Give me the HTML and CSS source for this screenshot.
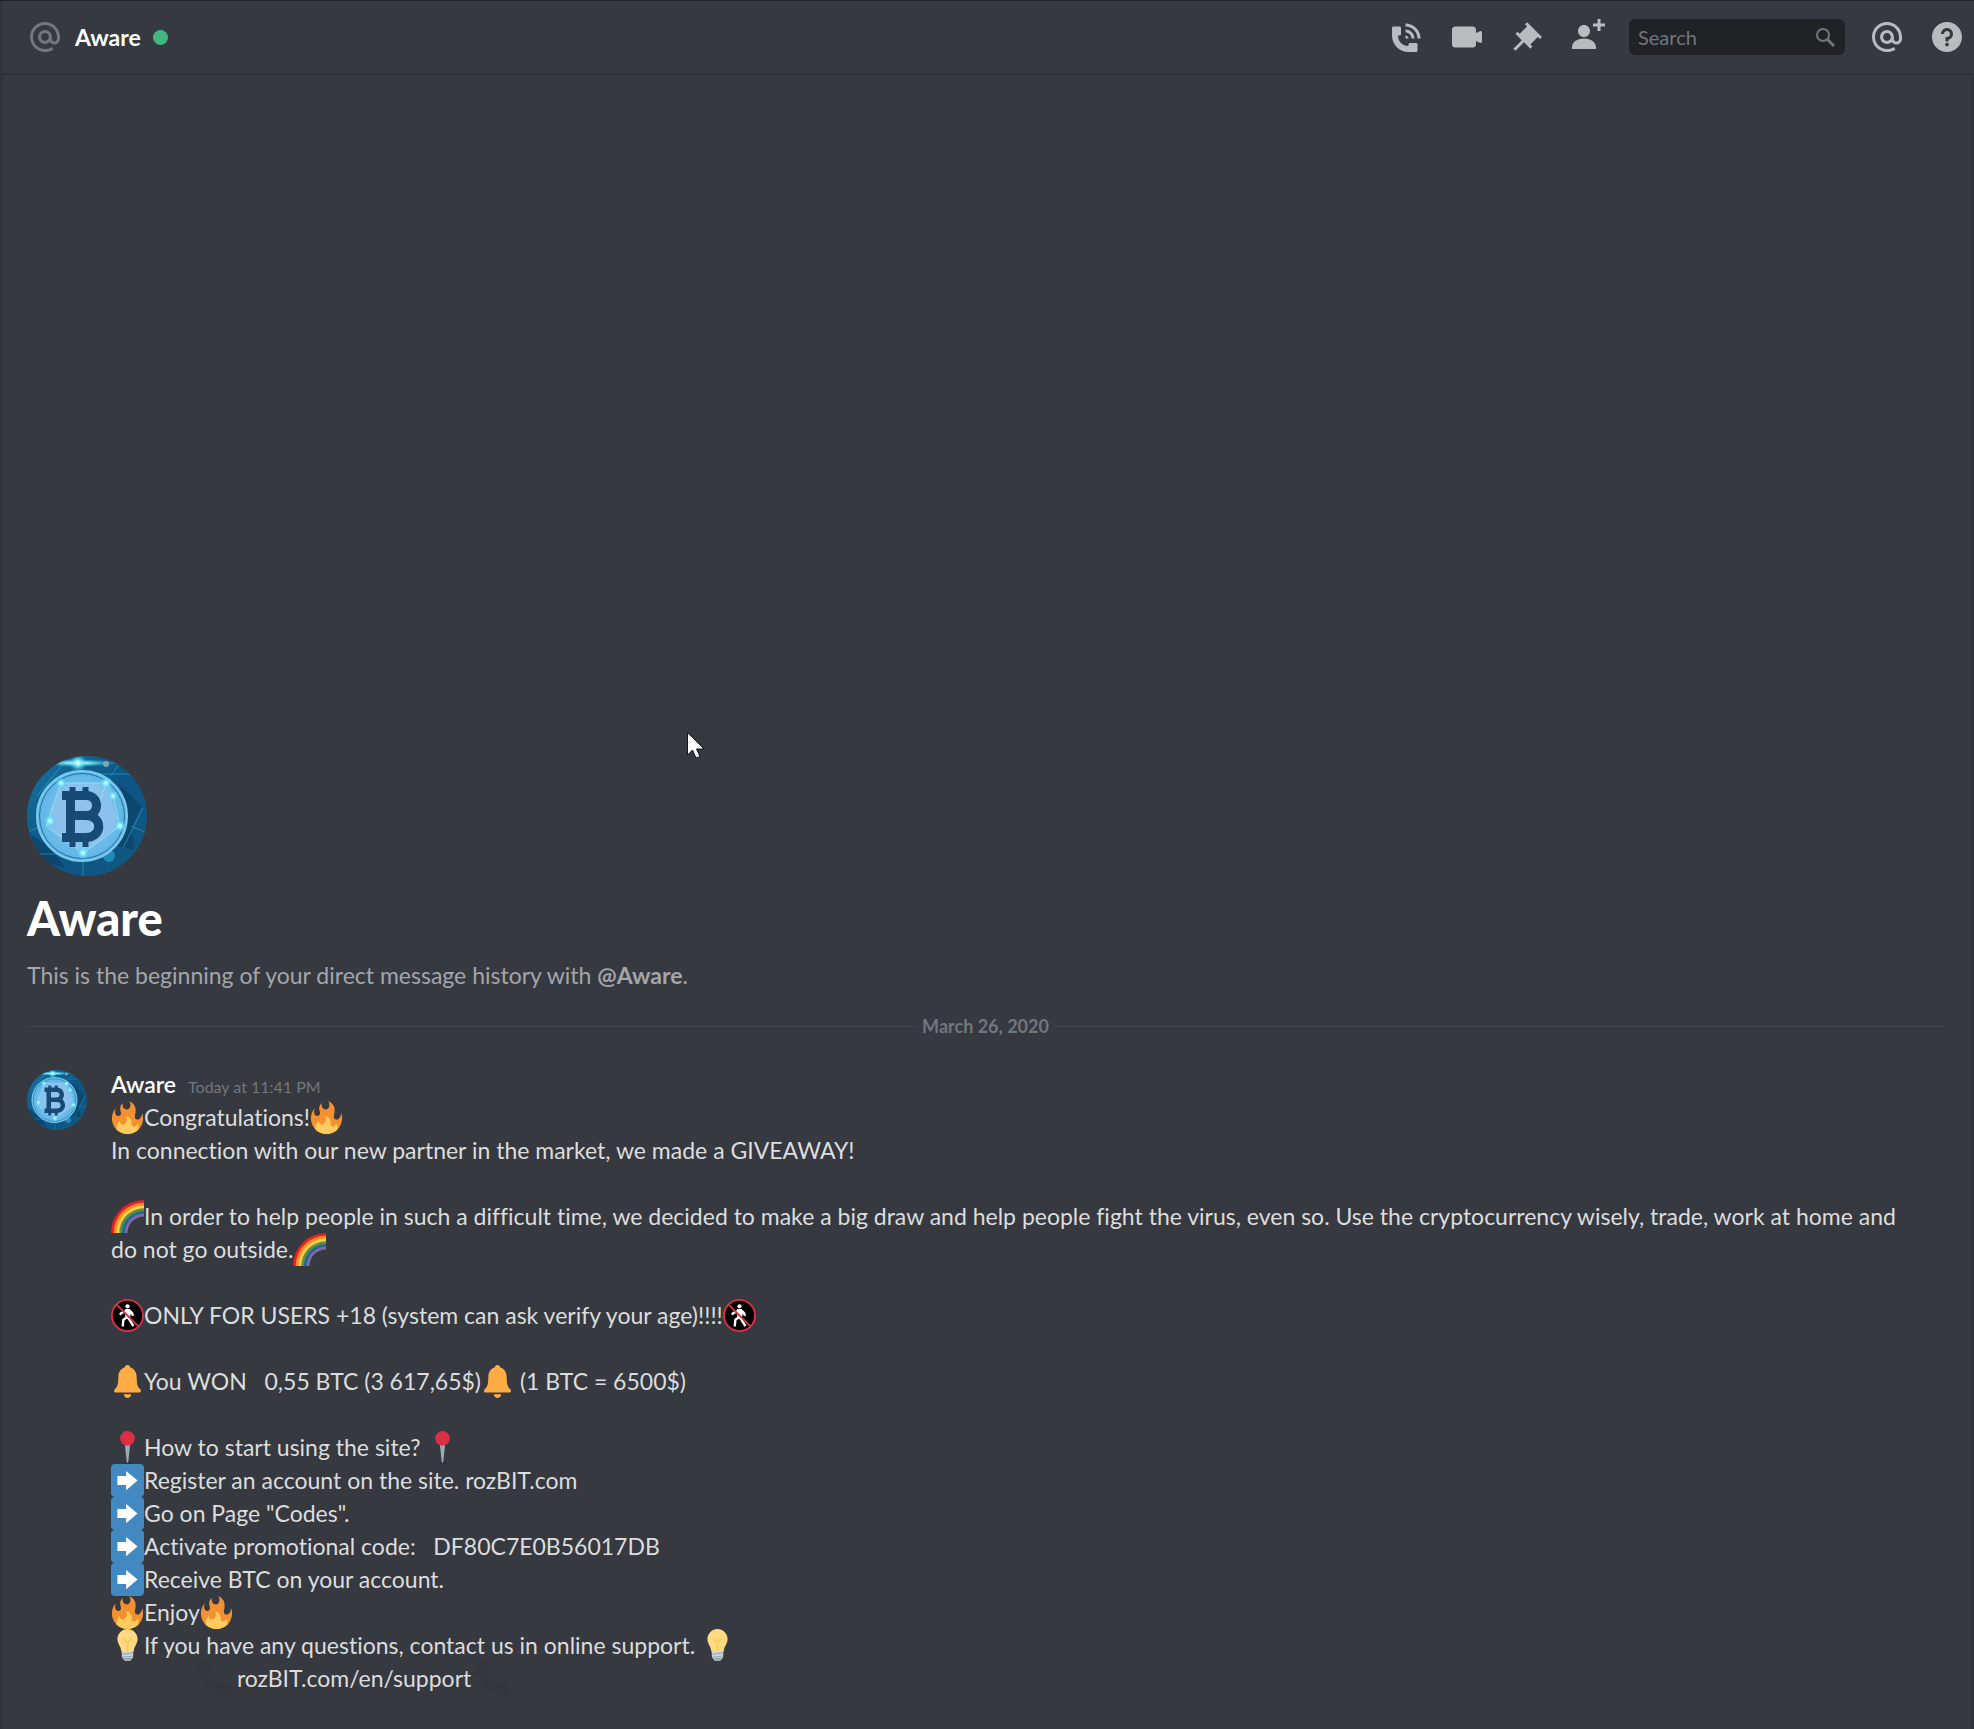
FILE: index.html
```html
<!DOCTYPE html>
<html lang="en">
<head>
  <meta charset="UTF-8">
  <title>Aware</title>
  <link rel="stylesheet" href="styles.css">
</head>
<body>
  <!-- Shared icons -->
  <svg class="sprite" aria-hidden="true">
    <symbol id="icon-at" viewBox="0 0 24 24">
      <path fill="currentColor" d="M12 2C6.486 2 2 6.486 2 12C2 17.515 6.486 22 12 22C14.039 22 15.993 21.398 17.652 20.259L16.521 18.611C15.195 19.519 13.633 20 12 20C7.589 20 4 16.411 4 12C4 7.589 7.589 4 12 4C16.411 4 20 7.589 20 12V12.782C20 14.17 19.402 15 18.4 15L18.398 15.018C18.338 15.005 18.273 15 18.209 15H18C17.437 15 16.6 14.182 16.6 13.631V12C16.6 9.464 14.537 7.4 12 7.4C9.463 7.4 7.4 9.463 7.4 12C7.4 14.537 9.463 16.6 12 16.6C13.234 16.6 14.35 16.106 15.177 15.313C15.826 16.269 16.93 17 18 17L18.002 16.981C18.064 16.994 18.129 17 18.195 17H18.4C20.552 17 22 15.306 22 12.782V12C22 6.486 17.514 2 12 2ZM12 14.599C10.566 14.599 9.4 13.433 9.4 11.999C9.4 10.565 10.566 9.399 12 9.399C13.434 9.399 14.6 10.565 14.6 11.999C14.6 13.433 13.434 14.599 12 14.599Z"/>
    </symbol>
    <symbol id="fire" viewBox="0 0 36 36">
      <path fill="#F4902F" d="M35 19c0-2.062-.367-4.039-1.04-5.868-.46 5.389-3.333 8.157-6.335 6.868-2.812-1.208-.917-5.917-.777-8.164.236-3.809-.012-8.169-6.931-11.794 2.875 5.5.333 8.917-2.333 9.125-2.958.231-5.667-2.542-4.667-7.042-3.238 2.386-3.332 6.402-2.333 9 1.042 2.708-.042 4.958-2.583 5.208-2.84.28-4.418-3.041-2.963-8.333C2.52 10.965 1 14.805 1 19c0 9.389 7.611 17 17 17s17-7.611 17-17z"/>
      <path fill="#FFCB5F" d="M28.394 23.999c.148 3.084-2.561 4.293-4.019 3.709-2.106-.843-1.541-2.291-2.083-5.291s-2.625-5.083-5.708-6c2.25 6.333-1.247 8.667-3.08 9.084-1.872.426-3.753-.001-3.968-4.007C7.352 23.668 6 26.676 6 30c0 .368.023.73.055 1.09C9.125 34.124 13.342 36 18 36s8.875-1.876 11.945-4.91c.032-.36.055-.722.055-1.09 0-2.187-.584-4.236-1.606-6.001z"/>
    </symbol>
    <symbol id="rainbow" viewBox="0 0 36 36">
      <path fill="#EB2027" d="M0 36A36 36 0 0 1 36 0v36z"/>
      <path fill="#F19020" d="M3 36A33 33 0 0 1 36 3v33z"/>
      <path fill="#FFCB4C" d="M6 36A30 30 0 0 1 36 6v30z"/>
      <path fill="#5C903F" d="M9 36A27 27 0 0 1 36 9v27z"/>
      <path fill="#226798" d="M12 36A24 24 0 0 1 36 12v24z"/>
      <path fill="#8767AC" d="M15 36A21 21 0 0 1 36 15v21z"/>
      <path fill="#36393F" d="M18 36A18 18 0 0 1 36 18v18z"/>
    </symbol>
    <symbol id="no-walking" viewBox="0 0 36 36">
      <circle cx="18" cy="18" r="17" fill="#000" stroke="#DD2E44" stroke-width="2"/>
      <circle cx="18" cy="8" r="2.3" fill="#fff"/>
      <path d="M17.500 12.500L11 15.500L9.800 17.200M17.500 20L13.500 22.500L12.800 30M18.500 20L24.500 29.500M20.500 13L23 15.500L24 18.500" fill="none" stroke="#fff" stroke-width="2.600"/>
      <path fill="#fff" d="M15.500 11h5l1.500 3-1.500 7.500h-5z"/>
      <path d="M6 6l24 24" stroke="#DD2E44" stroke-width="2"/>
    </symbol>
    <symbol id="bell" viewBox="0 0 36 36">
      <path fill="#FFAC45" d="M18 0c-1.700 0-3 1.200-3 2.700C10.500 4 8 8 8 13c0 9-1.500 11-4 13.500-1 1-1 3.500.8 3.500h26.400c1.800 0 1.800-2.500.8-3.500C29.500 24 28 22 28 13c0-5-2.500-9-7-10.300C21 1.200 19.700 0 18 0zM14 32h8c0 2.200-1.800 4-4 4s-4-1.800-4-4z"/>
    </symbol>
    <symbol id="pin-round" viewBox="0 0 36 36">
      <ellipse cx="18" cy="34.500" rx="4" ry="1.500" fill="#292F33"/>
      <path fill="#99AAB5" d="M15 14h6l-2.200 20c-.1 1-1.500 1-1.600 0z"/>
      <circle cx="18" cy="8" r="8" fill="#DD2E44"/>
    </symbol>
    <symbol id="arrow-right" viewBox="0 0 36 36">
      <path fill="#4289C1" d="M36 32c0 2.209-1.791 4-4 4H4c-2.209 0-4-1.791-4-4V4c0-2.209 1.791-4 4-4h28c2.209 0 4 1.791 4 4v28z"/>
      <path fill="#fff" d="M29 18L16.500 7.500V13H7v10h9.500v5.500z"/>
    </symbol>
    <symbol id="bulb" viewBox="0 0 36 36">
      <path fill="#FFD983" d="M29 11C29 5 24 0 18 0S7 5 7 11c0 5.500 4 8 4 13h14c0-5 4-7.500 4-13z"/>
      <path fill="none" stroke="#FFCC4D" stroke-width="2" d="M13.500 10.500L18 15l4.500-4.500M18 15v9"/>
      <path fill="#CCD6DD" d="M11.500 24h13l-.5 7-3 3.500h-6L12 31z"/>
      <path fill="none" stroke="#99AAB5" stroke-width="1.200" d="M12 27.500l12-1.500M12 31l12-1.500"/>
      <path fill="#99AAB5" d="M13 32l10-1c0 2.500-2 3.500-5 3.500s-4-.8-5-2.500z"/>
    </symbol>
    <symbol id="receiver" viewBox="0 0 36 36">
      <path fill="#33363D" d="M2 3c3-3 7-3 9 0s4 5 2 8c-2 2-3 2-2 5 2 4 5 7 9 9 3 1 3-1 5-2 3-2 5 0 8 2s4 5 1 8c-4 4-12 3-19-3C6 23 0 15 0 9c0-3 0-4 2-6z"/>
    </symbol>
    <symbol id="coin" viewBox="0 0 120 120">
      <clipPath id="coin-clip"><circle cx="60" cy="60" r="60"/></clipPath>
      <linearGradient id="coin-back" x1="0" y1="0" x2="1" y2="1">
        <stop offset="0" stop-color="#17749F"/>
        <stop offset=".5" stop-color="#0E5484"/>
        <stop offset="1" stop-color="#125A83"/>
      </linearGradient>
      <radialGradient id="coin-face">
        <stop offset="0" stop-color="#83BDEB"/>
        <stop offset=".7" stop-color="#72BBEB"/>
        <stop offset="1" stop-color="#5AB6E4"/>
      </radialGradient>
      <radialGradient id="glow">
        <stop offset="0" stop-color="#fff"/>
        <stop offset=".3" stop-color="#8DF3FF" stop-opacity=".9"/>
        <stop offset="1" stop-color="#35C0E8" stop-opacity="0"/>
      </radialGradient>
      <g clip-path="url(#coin-clip)">
        <path fill="url(#coin-back)" d="M0 0h120v120H0z"/>
        <path fill="#0A3A5C" opacity=".5" d="M92 28l22 22-10 24 4 20-18-4 10-40zM4 78l20 14 14 20-28-8z"/>
        <path d="M20 7h90M70 18h46M4 98h70M56 100v20M0 76l16-6M104 70l14 6M96 92l20-40M84 20L96 2M10 40l26-32" stroke="#38B5DD" stroke-width="1" opacity=".5"/>
        <ellipse cx="51" cy="7" rx="36" ry="4" fill="url(#glow)"/>
        <circle cx="51" cy="7" r="9" fill="url(#glow)"/>
        <circle cx="79" cy="8" r="3" fill="#7BA9B8"/>
        <circle cx="82" cy="100" r="6" fill="#2598C2" opacity=".8"/>
        <circle cx="55" cy="60" r="45" fill="url(#coin-face)" stroke="#7CC8EE" stroke-width="2"/>
        <circle cx="55" cy="60" r="42.500" fill="none" stroke="#246F9E" stroke-width="1"/>
        <path fill="#A9C9F0" opacity=".45" d="M34 27h45l14 43-37 27-37-27z"/>
        <path fill="none" stroke="#8EEBFA" stroke-width="1" opacity=".8" d="M34 27h45l7 13 7 30-37 27-37-27zM79 27L56 97"/>
        <g fill="url(#glow)">
          <circle cx="34" cy="27" r="6"/>
          <circle cx="79" cy="27" r="7"/>
          <circle cx="86" cy="40" r="6"/>
          <circle cx="93" cy="70" r="7"/>
          <circle cx="23" cy="65" r="7"/>
          <circle cx="56" cy="97" r="7"/>
        </g>
        <!-- bitcoin mark -->
        <g fill="none" stroke="#174A75" stroke-width="9">
          <path d="M35 39.500h24c14 0 14 20 0 20H44M59 59.500c17 0 17 22 0 22H35M43.500 39v43"/>
          <path d="M45.500 31v9M58.500 31v9M45.500 81v10M58.500 81v10" stroke-width="6"/>
        </g>
      </g>
    </symbol>
  </svg>

  <header class="top-bar">
    <svg class="icon at-icon"><use href="#icon-at"/></svg>
    <h1 class="channel-name">Aware</h1>
    <span class="status" role="img" aria-label="Online"></span>

    <div class="toolbar">
      <button class="icon-button" aria-label="Start Voice Call">
        <svg class="icon" viewBox="0 0 24 24"><path fill="currentColor" d="M11 5V3C16.515 3 21 7.486 21 13H19C19 8.589 15.411 5 11 5ZM17 13H15C15 10.795 13.206 9 11 9V7C14.309 7 17 9.691 17 13ZM11 11V13H13C13 11.896 12.105 11 11 11ZM14 16H18C18.553 16 19 16.447 19 17V21C19 21.553 18.553 22 18 22H13C6.925 22 2 17.075 2 11V6C2 5.447 2.448 5 3 5H7C7.553 5 8 5.447 8 6V10C8 10.553 7.553 11 7 11H6C6.063 14.938 9 18 13 18V17C13 16.447 13.447 16 14 16Z"/></svg>
      </button>
      <button class="icon-button" aria-label="Start Video Call">
        <svg class="icon" viewBox="0 0 24 24"><path fill="currentColor" d="M21.526 8.149C21.231 7.966 20.862 7.951 20.553 8.105L18 9.382V7C18 5.897 17.103 5 16 5H4C2.897 5 2 5.897 2 7V17C2 18.104 2.897 19 4 19H16C17.103 19 18 18.104 18 17V14.618L20.553 15.894C20.694 15.965 20.847 16 21 16C21.183 16 21.365 15.949 21.526 15.851C21.82 15.668 22 15.347 22 15V9C22 8.653 21.82 8.332 21.526 8.149Z"/></svg>
      </button>
      <button class="icon-button" aria-label="Pinned Messages">
        <svg class="icon" viewBox="0 0 24 24"><path fill="currentColor" d="M22 12L12.101 2.101L10.686 3.514L12.101 4.929L7.151 9.878V9.88L5.736 8.465L4.322 9.88L8.565 14.122L2.908 19.778L4.322 21.192L9.979 15.536L14.222 19.778L15.636 18.364L14.222 16.95L19.171 12H19.172L20.586 13.414L22 12Z"/></svg>
      </button>
      <button class="icon-button" aria-label="Add Friends to DM">
        <svg class="icon" viewBox="0 0 24 24"><path fill="currentColor" d="M21 3H24V5H21V8H19V5H16V3H19V0H21V3ZM10 12C12.205 12 14 10.205 14 8C14 5.795 12.205 4 10 4C7.795 4 6 5.795 6 8C6 10.205 7.795 12 10 12ZM10 13C5.289 13 2 15.467 2 19V20H18V19C18 15.467 14.711 13 10 13Z"/></svg>
      </button>
      <label class="search">
        <input type="text" placeholder="Search" aria-label="Search">
        <svg class="search-icon" viewBox="0 0 21 21"><circle cx="8" cy="8" r="6" fill="none" stroke="currentColor" stroke-width="2"/><path d="M12 12l7 7" stroke="currentColor" stroke-width="3"/></svg>
      </label>
      <button class="icon-button" aria-label="Mentions">
        <svg class="icon"><use href="#icon-at"/></svg>
      </button>
      <button class="icon-button" aria-label="Help">
        <svg class="icon" viewBox="0 0 24 24"><path fill="currentColor" d="M12 2C6.486 2 2 6.487 2 12C2 17.515 6.486 22 12 22C17.514 22 22 17.515 22 12C22 6.487 17.514 2 12 2ZM12 18.25C11.31 18.25 10.75 17.691 10.75 17C10.75 16.31 11.31 15.75 12 15.75C12.69 15.75 13.25 16.31 13.25 17C13.25 17.691 12.69 18.25 12 18.25ZM13 13.875V15H11V12H12C13.104 12 14 11.103 14 10C14 8.896 13.104 8 12 8C10.896 8 10 8.896 10 10H8C8 7.795 9.795 6 12 6C14.205 6 16 7.795 16 10C16 11.861 14.723 13.429 13 13.875Z"/></svg>
      </button>
    </div>
  </header>

  <main class="chat">
    <!-- Start of the conversation -->
    <section class="welcome">
      <svg class="avatar-large"><use href="#coin"/></svg>
      <h2>Aware</h2>
      <p>This is the beginning of your direct message history with <strong>@Aware</strong>.</p>
    </section>

    <div class="divider"><span>March 26, 2020</span></div>

    <article class="message">
      <svg class="avatar"><use href="#coin"/></svg>
      <div class="message-body">
        <h3 class="message-head"><span class="author">Aware</span> <time>Today at 11:41 PM</time></h3>
        <div class="message-text"><svg class="emoji"><use href="#fire"/></svg>Congratulations!<svg class="emoji"><use href="#fire"/></svg>
In connection with our new partner in the market, we made a GIVEAWAY!

<svg class="emoji"><use href="#rainbow"/></svg>In order to help people in such a difficult time, we decided to make a big draw and help people fight the virus, even so. Use the cryptocurrency wisely, trade, work at home and do not go outside.<svg class="emoji"><use href="#rainbow"/></svg>

<svg class="emoji"><use href="#no-walking"/></svg>ONLY FOR USERS +18 (system can ask verify your age)!!!!<svg class="emoji"><use href="#no-walking"/></svg>

<svg class="emoji"><use href="#bell"/></svg>You WON   0,55 BTC (3 617,65$)<svg class="emoji"><use href="#bell"/></svg> (1 BTC = 6500$)

<svg class="emoji"><use href="#pin-round"/></svg>How to start using the site? <svg class="emoji"><use href="#pin-round"/></svg>
<svg class="emoji"><use href="#arrow-right"/></svg>Register an account on the site. rozBIT.com
<svg class="emoji"><use href="#arrow-right"/></svg>Go on Page "Codes".
<svg class="emoji"><use href="#arrow-right"/></svg>Activate promotional code:   DF80C7E0B56017DB
<svg class="emoji"><use href="#arrow-right"/></svg>Receive BTC on your account.
<svg class="emoji"><use href="#fire"/></svg>Enjoy<svg class="emoji"><use href="#fire"/></svg>
<svg class="emoji"><use href="#bulb"/></svg>If you have any questions, contact us in online support. <svg class="emoji"><use href="#bulb"/></svg>
<span class="indent"><svg class="emoji"><use href="#receiver"/></svg> rozBIT.com/en/support <svg class="emoji"><use href="#receiver"/></svg></span></div>
      </div>
    </article>
  </main>

  <svg class="cursor" viewBox="0 0 18 27" aria-hidden="true">
    <path fill="#fff" stroke="#14161c" stroke-width="1" d="M.5.500v22.500l5-5 3.500 8 4-1.500-3.500-7.500h7.500z"/>
  </svg>
</body>
</html>
```
FILE: styles.css
```css
* {
  box-sizing: border-box;
}

body {
  margin: 0;
  min-height: 100vh;
  display: flex;
  flex-direction: column;
  background-color: #36393f;
  color: #dcddde;
  border-top: 1px solid #202225;
  font-family: Lato, "Noto Sans", sans-serif;
  font-size: 23px;
  font-variant-ligatures: none;
  line-height: 33px;
}

h1, h2, h3, p {
  margin: 0;
}

.sprite {
  position: absolute;
  width: 0;
  height: 0;
}

/* Top bar */
.top-bar {
  display: flex;
  align-items: center;
  height: 74px;
  padding: 0 9px 0 24px;
  border-left: 3px solid #313338;
  border-bottom: 2px solid #2f3136;
}

.icon {
  display: block;
  width: 36px;
  height: 36px;
}

.at-icon {
  color: #72767d;
}

.channel-name {
  margin: 0 12px;
  color: #fff;
  font-size: 23px;
  font-weight: bold;
}

.status {
  width: 15px;
  height: 15px;
  border-radius: 50%;
  background-color: #43b581;
}

.toolbar {
  display: flex;
  align-items: center;
  gap: 24px;
  margin-left: auto;
}

.icon-button {
  padding: 0;
  border: none;
  background: none;
  color: #b9bbbe;
  cursor: pointer;
}

.search {
  display: flex;
  align-items: center;
  width: 216px;
  height: 36px;
  padding: 0 9px;
  border-radius: 6px;
  background-color: #202225;
  color: #72767d;
}

.search input {
  flex: 1;
  min-width: 0;
  padding: 0;
  border: none;
  outline: none;
  background: none;
  color: #dcddde;
  font-family: inherit;
  font-size: 20px;
}

.search input::placeholder {
  color: #72767d;
}

.search-icon {
  width: 21px;
  height: 21px;
}

/* Conversation */
.chat {
  flex: 1;
  display: flex;
  flex-direction: column;
  justify-content: flex-end;
  padding: 0 27px 34px 24px;
  border-left: 3px solid #313338;
  border-right: 3px solid #313338;
}

.avatar-large {
  display: block;
  width: 120px;
  height: 120px;
}

.welcome h2 {
  margin: 12px 0 11px;
  color: #fff;
  font-size: 47px;
  font-weight: 900;
  line-height: 60px;
}

.welcome p {
  color: #a3a6aa;
}

.divider {
  display: flex;
  align-items: center;
  gap: 6px;
  margin-top: 24px;
  color: #72767d;
  font-size: 18px;
  font-weight: bold;
  line-height: 20px;
}

.divider::before,
.divider::after {
  content: "";
  flex: 1;
  height: 1px;
  background-color: #43464c;
}

.message {
  display: flex;
  gap: 24px;
  margin-top: 34px;
}

.avatar {
  flex: none;
  width: 60px;
  height: 60px;
}

.message-body {
  flex: 1;
  padding-right: 27px;
}

.message-head {
  display: flex;
  align-items: baseline;
  gap: 12px;
  line-height: 29px;
}

.author {
  color: #fff;
  font-size: 23px;
  font-weight: 600;
}

.message-head time {
  color: #72767d;
  font-size: 16px;
  font-weight: normal;
}

.message-text {
  white-space: pre-wrap;
}

.emoji {
  width: 33px;
  height: 33px;
  vertical-align: top;
}

.indent {
  padding-left: 87px;
}

.cursor {
  position: absolute;
  left: 687px;
  top: 732px;
  width: 18px;
  height: 27px;
}
```
